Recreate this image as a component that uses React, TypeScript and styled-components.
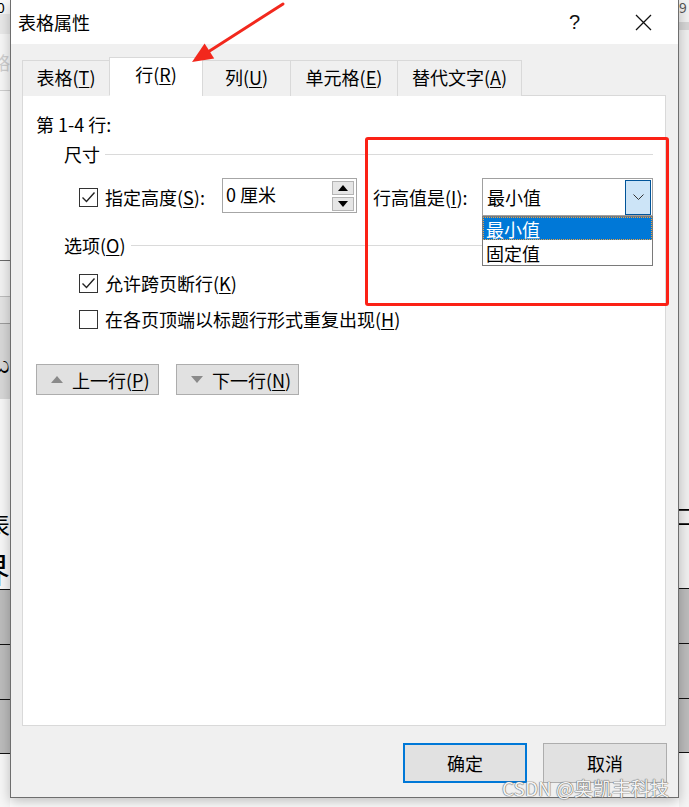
import React from "react";
import styled, { createGlobalStyle } from "styled-components";

const Global = createGlobalStyle`
  html, body { margin: 0; padding: 0; background: #ffffff; }
  body { font-family: "Noto Sans CJK SC", "Microsoft YaHei", sans-serif; color: #000; }
  * { box-sizing: border-box; }
`;

const Page = styled.div`
  position: relative;
  width: 689px;
  height: 807px;
  overflow: hidden;
  display: flex;
  align-items: flex-start;
  background: #ffffff;
`;

const Strip = styled.div`
  width: 10px;
  flex: none;
  height: 807px;
  display: flex;
  flex-direction: column;
  overflow: hidden;
`;

const Band = styled.div<{ $h: number; $bg?: string; $line?: string; $align?: string }>`
  height: ${(p) => p.$h}px;
  flex: none;
  background: ${(p) => p.$bg || "transparent"};
  border-top: ${(p) => (p.$line ? `1px solid ${p.$line}` : "none")};
  display: flex;
  justify-content: ${(p) => p.$align || "flex-start"};
  align-items: center;
  overflow: hidden;
  font-size: 20px;
  line-height: 1;
  white-space: nowrap;
`;

const Frag = styled.span<{ $c?: string; $size?: number }>`
  color: ${(p) => p.$c || "#000"};
  font-size: ${(p) => p.$size || 20}px;
  flex: none;
`;

const Dialog = styled.div`
  width: 669px;
  height: 798px;
  flex: none;
  background: #f0f0f0;
  border: 1px solid #6e6e6e;
  border-top: none;
  display: flex;
  flex-direction: column;
  box-shadow: 0 4px 12px rgba(0, 0, 0, 0.25);
  position: relative;
  z-index: 1;
`;

const TitleBar = styled.div`
  height: 44px;
  background: #ffffff;
  display: flex;
  align-items: center;
  padding-left: 7px;
  flex: none;
`;

const Title = styled.div`
  flex: 1;
  font-size: 18px;
  line-height: 24px;
`;

const TitleButton = styled.div`
  width: 69px;
  height: 44px;
  display: flex;
  align-items: center;
  justify-content: center;
  font-family: "Liberation Sans", sans-serif;
  font-size: 20px;
  color: #111;
`;

const Body = styled.div`
  flex: 1;
  display: flex;
  flex-direction: column;
  padding: 13px 11px 0 11px;
`;

const TabRow = styled.div`
  display: flex;
  align-items: flex-end;
  height: 39px;
  position: relative;
  z-index: 2;
  margin-bottom: -1px;
`;

const Tab = styled.div<{ $w: number; $active?: boolean }>`
  width: ${(p) => p.$w}px;
  height: ${(p) => (p.$active ? 39 : 36)}px;
  background: ${(p) => (p.$active ? "#ffffff" : "#f0f0f0")};
  border: 1px solid #d9d9d9;
  border-bottom: ${(p) => (p.$active ? "1px solid #ffffff" : "none")};
  margin-left: -1px;
  &:first-child { margin-left: 0; }
  display: flex;
  align-items: center;
  justify-content: center;
  padding-bottom: ${(p) => (p.$active ? 6 : 3)}px;
  font-size: 18px;
  line-height: 24px;
`;

const U = styled.span`
  text-decoration: underline;
  text-underline-offset: 2px;
  text-decoration-thickness: 1px;
`;

const Panel = styled.div`
  width: 644px;
  height: 631px;
  background: #ffffff;
  border: 1px solid #d9d9d9;
  padding: 16px 12px 0 13px;
  display: flex;
  flex-direction: column;
  flex: none;
`;

const Text = styled.div`
  font-size: 18px;
  line-height: 24px;
  white-space: nowrap;
`;

const SectionHeader = styled.div<{ $mt: number }>`
  display: flex;
  align-items: center;
  gap: 5px;
  margin-top: ${(p) => p.$mt}px;
  margin-left: 28px;
  height: 24px;
`;

const Rule = styled.div`
  flex: 1;
  height: 1px;
  background: #dadada;
  margin-top: 1px;
`;

const SizeRow = styled.div`
  display: flex;
  align-items: center;
  height: 38px;
  margin-top: 12px;
  margin-left: 43px;
`;

const CheckGroup = styled.div<{ $w?: number }>`
  display: flex;
  align-items: center;
  gap: 7px;
  width: ${(p) => (p.$w ? `${p.$w}px` : "auto")};
  flex: none;
`;

const Box = styled.div`
  width: 19px;
  height: 19px;
  border: 1px solid #333333;
  background: #fff;
  display: flex;
  align-items: center;
  justify-content: center;
  flex: none;
`;

const CheckRow = styled.div<{ $mt: number }>`
  display: flex;
  align-items: center;
  height: 24px;
  margin-top: ${(p) => p.$mt}px;
  margin-left: 43px;
`;

const SpinInput = styled.div`
  width: 135px;
  height: 35px;
  margin-top: -3px;
  border: 1px solid #a6a6a6;
  display: flex;
  align-items: center;
  padding: 0 2px 0 3px;
  flex: none;
`;

const InputText = styled.div`
  flex: 1;
  font-size: 18px;
  line-height: 24px;
  margin-top: -4px;
`;

const Spinner = styled.div`
  display: flex;
  flex-direction: column;
  gap: 2px;
  width: 22px;
`;

const SpinBtn = styled.div`
  height: 14px;
  background: #e6e6e6;
  border: 1px solid #b4b4b4;
  display: flex;
  align-items: center;
  justify-content: center;
`;

const ComboLabel = styled(Text)`
  width: 109px;
  margin-left: 16px;
  flex: none;
`;

const Combo = styled.div`
  position: relative;
  width: 171px;
  height: 38px;
  border: 1px solid #a0a0a0;
  background: #fff;
  display: flex;
  align-items: center;
  padding: 1px 1px 1px 4px;
  flex: none;
`;

const ComboText = styled.div`
  flex: 1;
  font-size: 18px;
  line-height: 24px;
`;

const DropBtn = styled.div`
  width: 26px;
  height: 35px;
  background: #cce4f7;
  border: 1px solid #005499;
  display: flex;
  align-items: center;
  justify-content: center;
`;

const List = styled.div`
  position: absolute;
  left: -1px;
  top: 37px;
  width: 171px;
  border: 1px solid #7a7a7a;
  background: #fff;
  z-index: 5;
`;

const ListItem = styled.div<{ $sel?: boolean }>`
  height: ${(p) => (p.$sel ? 23 : 25)}px;
  background: ${(p) => (p.$sel ? "#0078d7" : "#fff")};
  color: ${(p) => (p.$sel ? "#fff" : "#000")};
  border: ${(p) => (p.$sel ? "1px dotted #f0a040" : "1px solid transparent")};
  font-size: 18px;
  line-height: 22px;
  padding-left: 2px;
  display: flex;
  align-items: center;
`;

const NavRow = styled.div`
  display: flex;
  gap: 17px;
  margin-top: 33px;
`;

const NavButton = styled.div`
  width: 123px;
  height: 31px;
  background: #e1e1e1;
  border: 1px solid #adadad;
  display: flex;
  align-items: center;
  padding-left: 14px;
  gap: 9px;
  font-size: 18px;
  line-height: 24px;
`;

const Footer = styled.div`
  display: flex;
  justify-content: flex-end;
  gap: 16px;
  padding-top: 17px;
`;

const DlgButton = styled.div<{ $default?: boolean }>`
  width: 124px;
  height: 40px;
  background: #e1e1e1;
  border: ${(p) => (p.$default ? "2px solid #0078d7" : "1px solid #adadad")};
  display: flex;
  align-items: center;
  justify-content: center;
  font-size: 18px;
  line-height: 24px;
`;

const Highlight = styled.div`
  position: absolute;
  left: 365px;
  top: 137px;
  width: 304px;
  height: 169px;
  border: 3px solid #fb2116;
  border-radius: 3px;
  z-index: 6;
  pointer-events: none;
`;

const ArrowSvg = styled.svg`
  position: absolute;
  left: 0;
  top: 0;
  z-index: 7;
  pointer-events: none;
`;

const Watermark = styled.div`
  position: absolute;
  left: 502px;
  top: 776px;
  font-family: "Noto Sans CJK SC", sans-serif;
  font-size: 19px;
  line-height: 24px;
  color: #f4f4f4;
  text-shadow: 0 0 1px #6a6a6a, 0 0 1px #6a6a6a, 0 0 1px #6a6a6a;
  z-index: 8;
  white-space: nowrap;
`;

const Check = () => (
  <svg width="15" height="12" viewBox="0 0 15 12">
    <path d="M1.5 6.5 L5.5 10.5 L13.5 1.5" fill="none" stroke="#222" strokeWidth="1.4" />
  </svg>
);

const CheckBox = ({ checked }: { checked?: boolean }) => <Box>{checked ? <Check /> : null}</Box>;

const Tri = ({ up, color = "#000", w = 10, h = 6 }: { up?: boolean; color?: string; w?: number; h?: number }) => (
  <svg width={w} height={h} viewBox={`0 0 ${w} ${h}`}>
    {up ? <polygon points={`0,${h} ${w},${h} ${w / 2},0`} fill={color} /> : <polygon points={`0,0 ${w},0 ${w / 2},${h}`} fill={color} />}
  </svg>
);

const tabs = [
  { label: "表格", key: "T", w: 88 },
  { label: "行", key: "R", w: 94, active: true },
  { label: "列", key: "U", w: 89 },
  { label: "单元格", key: "E", w: 108 },
  { label: "替代文字", key: "A", w: 125 },
];

const Label = ({ text, k, suffix = "" }: { text: string; k: string; suffix?: string }) => (
  <>
    {text}(<U>{k}</U>){suffix}
  </>
);

export default function App() {
  return (
    <>
      <Global />
      <Page>
        <Strip>
          <Band $h={14} $bg="#fafafa"><Frag $size={14} style={{ marginLeft: -3 }}>0</Frag></Band>
          <Band $h={20} $bg="#e9e9e9" />
          <Band $h={56} $bg="#f7f7f7" $align="flex-end"><Frag $c="#cfcfcf" $size={18}>略</Frag></Band>
          <Band $h={170} $bg="#f9f9f9" $line="#cfcfcf" />
          <Band $h={36} $bg="#f2f2f2" $line="#6a6a6a" />
          <Band $h={27} $bg="#e4e4e4" $line="#bdbdbd" />
          <Band $h={76} $bg="#d8d8d8" $line="#9d9d9d" $align="flex-end"><Frag $size={26}>ಬ</Frag></Band>
          <Band $h={100} $bg="#f7f7f7" />
          <Band $h={50} $bg="#f7f7f7" $align="flex-end"><Frag $size={24}>表</Frag></Band>
          <Band $h={40} $bg="#f7f7f7" $align="flex-end"><Frag $size={34}>界</Frag></Band>
          <Band $h={55} $bg="#bcbcbc" $line="#111" />
          <Band $h={55} $bg="#bcbcbc" $line="#111" />
          <Band $h={54} $bg="#bcbcbc" $line="#111" />
          <Band $h={55} $bg="#f7f7f7" $line="#111" />
        </Strip>
        <Dialog>
          <TitleBar>
            <Title>表格属性</Title>
            <TitleButton>?</TitleButton>
            <TitleButton>
              <svg width="17" height="17" viewBox="0 0 17 17">
                <path d="M1 1 L16 16 M16 1 L1 16" stroke="#111" strokeWidth="1.3" />
              </svg>
            </TitleButton>
          </TitleBar>
          <Body>
            <TabRow>
              {tabs.map((t) => (
                <Tab key={t.key} $w={t.w} $active={t.active}>
                  <Label text={t.label} k={t.key} />
                </Tab>
              ))}
            </TabRow>
            <Panel>
              <Text>第 1-4 行:</Text>
              <SectionHeader $mt={6}>
                <Text>尺寸</Text>
                <Rule />
              </SectionHeader>
              <SizeRow>
                <CheckGroup $w={143}>
                  <CheckBox checked />
                  <Text><Label text="指定高度" k="S" suffix=":" /></Text>
                </CheckGroup>
                <SpinInput>
                  <InputText>0 厘米</InputText>
                  <Spinner>
                    <SpinBtn><Tri up w={10} h={6} /></SpinBtn>
                    <SpinBtn><Tri w={10} h={6} /></SpinBtn>
                  </Spinner>
                </SpinInput>
                <ComboLabel><Label text="行高值是" k="I" suffix=":" /></ComboLabel>
                <Combo>
                  <ComboText>最小值</ComboText>
                  <DropBtn>
                    <svg width="11" height="6" viewBox="0 0 11 6">
                      <path d="M0.5 0.5 L5.5 5.5 L10.5 0.5" fill="none" stroke="#333" strokeWidth="1" />
                    </svg>
                  </DropBtn>
                  <List>
                    <ListItem $sel>最小值</ListItem>
                    <ListItem>固定值</ListItem>
                  </List>
                </Combo>
              </SizeRow>
              <SectionHeader $mt={17}>
                <Text><Label text="选项" k="O" /></Text>
                <Rule />
              </SectionHeader>
              <CheckRow $mt={14}>
                <CheckGroup>
                  <CheckBox checked />
                  <Text><Label text="允许跨页断行" k="K" /></Text>
                </CheckGroup>
              </CheckRow>
              <CheckRow $mt={12}>
                <CheckGroup>
                  <CheckBox />
                  <Text><Label text="在各页顶端以标题行形式重复出现" k="H" /></Text>
                </CheckGroup>
              </CheckRow>
              <NavRow>
                <NavButton>
                  <Tri up color="#8a8a8a" w={12} h={7} />
                  <span><Label text="上一行" k="P" /></span>
                </NavButton>
                <NavButton>
                  <Tri color="#8a8a8a" w={12} h={7} />
                  <span><Label text="下一行" k="N" /></span>
                </NavButton>
              </NavRow>
            </Panel>
            <Footer>
              <DlgButton $default>确定</DlgButton>
              <DlgButton>取消</DlgButton>
            </Footer>
          </Body>
        </Dialog>
        <Strip>
          <Band $h={14} $bg="#f2f2f2"><Frag $size={14} $c="#555">9</Frag></Band>
          <Band $h={8} $bg="#f2f2f2" />
          <Band $h={8} $bg="#d6d6d6" />
          <Band $h={465} $bg="#f0f0f0" />
          <Band $h={40} $bg="#f0f0f0"><Frag $size={22} style={{ marginLeft: -6 }}>口</Frag></Band>
          <Band $h={53} $bg="#f0f0f0" />
          <Band $h={55} $bg="#bcbcbc" $line="#111" />
          <Band $h={55} $bg="#bcbcbc" $line="#111" />
          <Band $h={54} $bg="#bcbcbc" $line="#111" />
          <Band $h={55} $bg="#f5f5f5" $line="#111" />
        </Strip>
        <Highlight />
        <ArrowSvg width="689" height="120" viewBox="0 0 689 120">
          <line x1="283" y1="4" x2="208" y2="52" stroke="#f2281d" strokeWidth="3" strokeLinecap="round" />
          <polygon points="192,62 204.6,43.6 214.2,58.5" fill="#f2281d" />
        </ArrowSvg>
        <Watermark>CSDN @奥凯丰科技</Watermark>
      </Page>
    </>
  );
}
